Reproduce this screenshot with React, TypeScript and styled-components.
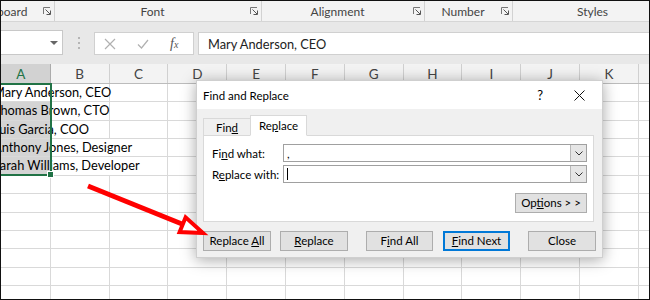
import styled, { createGlobalStyle } from "styled-components";

const COL_W = 58.8;
const ROW_H = 18.36;
const COLS = ["A", "B", "C", "D", "E", "F", "G", "H", "I", "J", "K", "L"];

const GlobalStyle = createGlobalStyle`
  html, body {
    margin: 0;
    padding: 0;
    background: #fff;
  }
  body {
    font-family: "Lato", "Liberation Sans", sans-serif;
  }
`;

const Screen = styled.div`
  position: relative;
  width: 650px;
  height: 300px;
  box-sizing: border-box;
  border: 1px solid #111;
  overflow: hidden;
  display: flex;
  flex-direction: column;
  background: #fff;
`;

/* ribbon group captions */
const RibbonLabels = styled.div`
  display: flex;
  flex-shrink: 0;
  height: 21px;
  margin-left: -40px;
  background: #f3f3f3;
  border-bottom: 1px solid #d6d6d6;
  box-sizing: border-box;
`;

const Group = styled.div<{ $w: number; $launcher?: boolean }>`
  flex: 0 0 ${(p) => p.$w}px;
  display: flex;
  align-items: center;
  padding-right: ${(p) => (p.$launcher ? 3 : 0)}px;
  border-right: 1px solid #d2d2d2;
  box-sizing: border-box;
`;

const GroupLabel = styled.span`
  flex: 1;
  text-align: center;
  font-size: 12px;
  color: #444;
`;

const Launcher = () => (
  <svg width="8" height="8" viewBox="0 0 8 8">
    <path d="M0.5 7V0.5H7" fill="none" stroke="#777" />
    <path d="M2.5 2.5L7 7M7.5 3.5V7.5H3.5" fill="none" stroke="#555" />
  </svg>
);

/* formula bar */
const FormulaBar = styled.div`
  display: flex;
  align-items: flex-start;
  flex-shrink: 0;
  height: 42px;
  padding-top: 8px;
  background: #e8e8e8;
  box-sizing: border-box;
`;

const NameBox = styled.div`
  width: 62px;
  height: 25px;
  display: flex;
  align-items: center;
  justify-content: flex-end;
  padding-right: 4px;
  background: #fff;
  border: 1px solid #c8c8c8;
  border-left: none;
  box-sizing: border-box;
`;

const Grip = styled.div`
  width: 31px;
  height: 25px;
  display: flex;
  align-items: center;
  justify-content: center;
`;

const FxBox = styled.div`
  width: 100px;
  height: 23px;
  margin-top: 2px;
  display: flex;
  align-items: center;
  gap: 21px;
  padding-left: 9px;
  background: #fff;
  border: 1px solid #d0d0d0;
  box-sizing: border-box;
`;

const FxGlyph = styled.span`
  width: 12px;
  font-family: "Liberation Serif", serif;
  font-style: italic;
  font-size: 14px;
  color: #555;
  line-height: 1;
  sub {
    font-size: 10px;
    vertical-align: 0;
  }
`;

const FormulaInput = styled.div`
  flex: 1;
  height: 23px;
  margin-top: 2px;
  margin-left: 4px;
  padding-left: 9px;
  display: flex;
  align-items: center;
  background: #fff;
  border: 1px solid #d0d0d0;
  border-right: none;
  box-sizing: border-box;
  font-size: 12.8px;
  color: #222;
`;

/* worksheet */
const Sheet = styled.div`
  position: relative;
  flex: 1;
  margin-left: -9px;
`;

const HeaderRow = styled.div`
  display: flex;
  height: 20px;
  background: #f3f3f3;
  border-bottom: 1px solid #bcbcbc;
  box-sizing: border-box;
`;

const ColHead = styled.div<{ $active?: boolean }>`
  flex: 0 0 ${COL_W}px;
  display: flex;
  align-items: center;
  justify-content: center;
  font-size: 13.5px;
  color: ${(p) => (p.$active ? "#217346" : "#444")};
  background: ${(p) => (p.$active ? "#d2d2d2" : "transparent")};
  border-right: 1px solid ${(p) => (p.$active ? "#ababab" : "#d0d0d0")};
  box-sizing: border-box;
`;

const Row = styled.div`
  display: grid;
  grid-template-columns: repeat(${COLS.length}, ${COL_W}px);
  height: ${ROW_H}px;
`;

const Cell = styled.div<{ $span?: number; $shaded?: boolean }>`
  grid-column: span ${(p) => p.$span ?? 1};
  padding-left: 1px;
  border-right: 1px solid #d9d9d9;
  border-bottom: 1px solid #d9d9d9;
  box-sizing: border-box;
  white-space: nowrap;
  font-size: 12.8px;
  line-height: ${ROW_H - 1}px;
  color: #000;
  background: ${(p) =>
    p.$shaded
      ? `linear-gradient(to right, #d4d4d4 ${COL_W - 1}px, transparent ${COL_W - 1}px)`
      : "transparent"};
`;

const Selection = styled.div`
  position: absolute;
  left: 0;
  top: 19px;
  width: ${COL_W + 1}px;
  height: ${ROW_H * 5 + 1}px;
  border: 2px solid #217346;
  box-sizing: border-box;
  pointer-events: none;
`;

const FillHandle = styled.div`
  position: absolute;
  right: -4px;
  bottom: -4px;
  width: 5px;
  height: 5px;
  background: #217346;
  border: 1px solid #fff;
`;

/* dialog */
const Dialog = styled.div`
  position: absolute;
  left: 195px;
  top: 79px;
  width: 407px;
  height: 178px;
  display: flex;
  flex-direction: column;
  background: #f0f0f0;
  border: 1px solid #cfcfcf;
  box-sizing: border-box;
  box-shadow: 0 2px 14px rgba(0, 0, 0, 0.35);
  font-size: 11.5px;
  color: #000;
`;

const TitleBar = styled.div`
  height: 28px;
  display: flex;
  align-items: center;
  padding: 0 17px 0 6px;
  background: #fff;
  flex-shrink: 0;
`;

const Title = styled.span`
  flex: 1;
  font-size: 11.5px;
`;

const Help = styled.span`
  font-size: 13px;
  margin-right: 31px;
`;

const Body = styled.div`
  flex: 1;
  display: flex;
  flex-direction: column;
  padding: 6px 0 0 6px;
`;

const Tabs = styled.div`
  display: flex;
  align-items: flex-end;
  margin-bottom: -1px;
  position: relative;
  z-index: 1;
`;

const Tab = styled.div<{ $active?: boolean; $w: number }>`
  width: ${(p) => p.$w}px;
  height: ${(p) => (p.$active ? 21 : 18)}px;
  display: flex;
  align-items: center;
  justify-content: center;
  background: ${(p) => (p.$active ? "#fff" : "#f0f0f0")};
  border: 1px solid #d9d9d9;
  border-bottom: ${(p) => (p.$active ? "1px solid #fff" : "1px solid #d9d9d9")};
  margin-left: ${(p) => (p.$active ? -1 : 0)}px;
  box-sizing: border-box;
  padding-top: ${(p) => (p.$active ? 0 : 1)}px;
`;

const Panel = styled.div`
  width: 391px;
  height: 87px;
  display: flex;
  flex-direction: column;
  padding: 8px 6px 0 8px;
  background: #fff;
  border: 1px solid #d9d9d9;
  box-sizing: border-box;
`;

const Field = styled.div`
  display: flex;
  align-items: center;
  height: 18px;
  margin-bottom: 3px;
`;

const FieldLabel = styled.span`
  width: 71px;
`;

const Combo = styled.div`
  flex: 1;
  height: 18px;
  display: flex;
  align-items: center;
  padding-left: 3px;
  border: 1px solid #a0a0a0;
  box-sizing: border-box;
`;

const ComboText = styled.span`
  flex: 1;
  display: flex;
  align-items: center;
  height: 100%;
`;

const Caret = styled.span`
  width: 1px;
  height: 12px;
  background: #000;
`;

const DropButton = styled.div`
  width: 15px;
  height: 16px;
  display: flex;
  align-items: center;
  justify-content: center;
  background: #e6e6e6;
  border-left: 1px solid #b8b8b8;
`;

const OptionsRow = styled.div`
  display: flex;
  justify-content: flex-end;
  margin-top: 7px;
`;

const Button = styled.div<{ $ml?: number; $default?: boolean; $w?: number }>`
  width: ${(p) => p.$w ?? 68}px;
  height: 20px;
  margin-left: ${(p) => p.$ml ?? 0}px;
  text-align: center;
  line-height: 18px;
  white-space: pre;
  background: #e1e1e1;
  border: 1px solid ${(p) => (p.$default ? "#0078d7" : "#adadad")};
  box-shadow: ${(p) => (p.$default ? "inset 0 0 0 1px #0078d7" : "none")};
  box-sizing: border-box;
  font-size: 11.5px;
`;

const ButtonRow = styled.div`
  display: flex;
  margin-top: 9px;
`;

const Key = styled.span`
  text-decoration: underline;
  text-underline-offset: 1px;
`;

const Arrow = styled.svg`
  position: absolute;
  left: 79px;
  top: 175px;
  overflow: visible;
  pointer-events: none;
`;

const Chevron = () => (
  <svg width="8" height="5" viewBox="0 0 8 5">
    <path d="M0.5 0.5L4 4L7.5 0.5" fill="none" stroke="#333" />
  </svg>
);

const rows: { text?: string; span?: number; shaded?: boolean }[] = [
  { text: "Mary Anderson, CEO", span: 2 },
  { text: "Thomas Brown, CTO", span: 2, shaded: true },
  { text: "Luis Garcia, COO", span: 2, shaded: true },
  { text: "Anthony Jones, Designer", span: 3, shaded: true },
  { text: "Sarah Williams, Developer", span: 3, shaded: true },
  {},
  {},
  {},
  {},
  {},
  {},
  {},
];

export default function App() {
  return (
    <>
      <GlobalStyle />
      <Screen>
        <RibbonLabels>
          <Group $w={94} $launcher>
            <GroupLabel>Clipboard</GroupLabel>
            <Launcher />
          </Group>
          <Group $w={207} $launcher>
            <GroupLabel>Font</GroupLabel>
            <Launcher />
          </Group>
          <Group $w={163} $launcher>
            <GroupLabel>Alignment</GroupLabel>
            <Launcher />
          </Group>
          <Group $w={88} $launcher>
            <GroupLabel>Number</GroupLabel>
            <Launcher />
          </Group>
          <Group $w={160}>
            <GroupLabel>Styles</GroupLabel>
          </Group>
        </RibbonLabels>

        <FormulaBar>
          <NameBox>
            <svg width="8" height="4" viewBox="0 0 8 4">
              <path d="M0 0H8L4 4Z" fill="#666" />
            </svg>
          </NameBox>
          <Grip>
            <svg width="2" height="12" viewBox="0 0 2 12">
              <rect x="0" y="0" width="2" height="2" fill="#b5b5b5" />
              <rect x="0" y="5" width="2" height="2" fill="#b5b5b5" />
              <rect x="0" y="10" width="2" height="2" fill="#b5b5b5" />
            </svg>
          </Grip>
          <FxBox>
            <svg width="12" height="12" viewBox="0 0 12 12">
              <path d="M1 1L11 11M11 1L1 11" stroke="#b0b0b0" strokeWidth="1.2" />
            </svg>
            <svg width="12" height="12" viewBox="0 0 12 12">
              <path d="M1 6.5L4.5 10L11 2" fill="none" stroke="#b0b0b0" strokeWidth="1.2" />
            </svg>
            <FxGlyph>
              f<sub>x</sub>
            </FxGlyph>
          </FxBox>
          <FormulaInput>Mary Anderson, CEO</FormulaInput>
        </FormulaBar>

        <Sheet>
          <HeaderRow>
            {COLS.map((c) => (
              <ColHead key={c} $active={c === "A"}>
                {c}
              </ColHead>
            ))}
          </HeaderRow>
          {rows.map((r, i) => {
            const span = r.span ?? 1;
            return (
              <Row key={i}>
                <Cell $span={span} $shaded={r.shaded}>
                  {r.text}
                </Cell>
                {COLS.slice(span).map((c) => (
                  <Cell key={c} />
                ))}
              </Row>
            );
          })}
          <Selection>
            <FillHandle />
          </Selection>
        </Sheet>

        <Dialog>
          <TitleBar>
            <Title>Find and Replace</Title>
            <Help>?</Help>
            <svg width="11" height="11" viewBox="0 0 11 11">
              <path d="M0.5 0.5L10.5 10.5M10.5 0.5L0.5 10.5" stroke="#111" strokeWidth="1" />
            </svg>
          </TitleBar>
          <Body>
            <Tabs>
              <Tab $w={48}>
                Fin<Key>d</Key>
              </Tab>
              <Tab $w={57} $active>
                Re<Key>p</Key>lace
              </Tab>
            </Tabs>
            <Panel>
              <Field>
                <FieldLabel>
                  Fi<Key>n</Key>d what:
                </FieldLabel>
                <Combo>
                  <ComboText>,</ComboText>
                  <DropButton>
                    <Chevron />
                  </DropButton>
                </Combo>
              </Field>
              <Field>
                <FieldLabel>
                  R<Key>e</Key>place with:
                </FieldLabel>
                <Combo>
                  <ComboText>
                    <Caret />
                  </ComboText>
                  <DropButton>
                    <Chevron />
                  </DropButton>
                </Combo>
              </Field>
              <OptionsRow>
                <Button $w={72}>
                  Op<Key>t</Key>ions &gt; &gt;
                </Button>
              </OptionsRow>
            </Panel>
            <ButtonRow>
              <Button>
                Replace <Key>A</Key>ll
              </Button>
              <Button $ml={9}>
                <Key>R</Key>eplace
              </Button>
              <Button $ml={18} $w={67}>
                F<Key>i</Key>nd All
              </Button>
              <Button $ml={10} $w={67} $default>
                <Key>F</Key>ind Next
              </Button>
              <Button $ml={18}>Close</Button>
            </ButtonRow>
          </Body>
        </Dialog>

        <Arrow width="130" height="64" viewBox="0 0 130 64">
          <path d="M8 10L102 48" stroke="#f00" strokeWidth="5" />
          <polygon
            points="123,57 99.6,56.1 105.6,41.3"
            fill="#fff"
            stroke="#f00"
            strokeWidth="4"
            strokeLinejoin="miter"
          />
        </Arrow>
      </Screen>
    </>
  );
}
